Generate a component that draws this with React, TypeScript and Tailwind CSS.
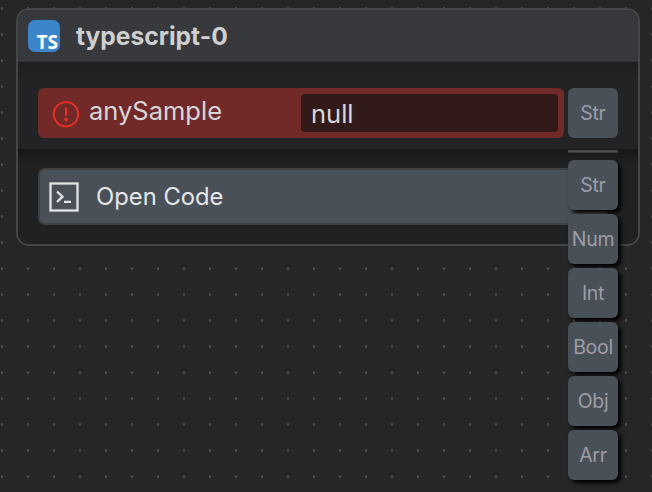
import React from 'react';

const outputTypes = ['Str', 'Num', 'Int', 'Bool', 'Obj', 'Arr'];

function TypeChip({ label, raised = false }: { label: string; raised?: boolean }) {
  return (
    <button
      className={
        'flex h-[50px] w-[50px] shrink-0 items-center justify-center rounded-[6px] bg-[#495058] text-[19.5px] leading-[22px] tracking-[-0.3px] text-[#9d9da6] ' +
        (raised ? 'shadow-[3px_3px_4px_#000000]' : '')
      }
    >
      {label}
    </button>
  );
}

function DotGrid() {
  return (
    <svg className="absolute inset-0 h-full w-full" aria-hidden="true">
      <defs>
        <pattern id="dots" width="26" height="26" patternUnits="userSpaceOnUse">
          <rect x="1" y="7" width="2" height="3" fill="#424242" />
          <rect x="1" y="8" width="2" height="1" fill="#505050" />
        </pattern>
      </defs>
      <rect width="100%" height="100%" fill="url(#dots)" />
    </svg>
  );
}

function AlertIcon() {
  return (
    <svg className="mt-[2px] h-[28px] w-[28px] shrink-0" viewBox="0 0 28 28" fill="none">
      <circle cx="14" cy="14.3" r="12.2" stroke="#ee3024" strokeWidth="1.8" />
      <path d="M14 7.8V15.8" stroke="#ee3024" strokeWidth="2" />
      <circle cx="14" cy="19.6" r="1.8" fill="#ee3024" />
    </svg>
  );
}

function TerminalIcon() {
  return (
    <svg className="h-[30px] w-[30px] shrink-0" viewBox="0 0 30 30" fill="none" stroke="#e2e4e6" strokeWidth="2.3">
      <rect x="1.5" y="1.5" width="27" height="27" />
      <path d="M8 9.5L13.5 14.7L8 20M15 19.8H22" />
    </svg>
  );
}

export default function App() {
  return (
    <div className="relative h-[492px] w-[652px] overflow-hidden bg-[#262626] pt-[8px] pl-[16px] font-['Inter',sans-serif]">
      <DotGrid />
      <section className="relative h-[238px] w-[624px] rounded-[13px] border-2 border-[#454648] bg-[#202123]">
        <header className="flex h-[52px] items-center rounded-t-[11px] border-b border-[#303134] bg-[#38393d] pl-[10px]">
          <div className="mt-px flex h-[32px] w-[32px] items-end justify-end rounded-[7px] bg-[#3b86cb] pr-[2px] pb-[3px] font-['Open_Sans',sans-serif] text-[19px] leading-[14px] font-bold text-white">
            TS
          </div>
          <h1 className="ml-[16px] text-[24.6px] leading-[30px] font-bold text-[#cfcfd0]">typescript-0</h1>
        </header>
        <div className="flex h-[87px] gap-[4px] bg-gradient-to-b from-[#1d1e20] to-[#222325] to-20% pt-[26px] pl-[20px]">
          <div className="flex h-[50px] w-[526px] items-center rounded-[6px] bg-[#722a28] pr-[6px] pl-[14px]">
            <AlertIcon />
            <span className="mt-[-4px] ml-[9px] w-[212px] text-[25.5px] leading-[32px] text-[#d6d7dc]">anySample</span>
            <div className="flex h-[38px] flex-1 items-center rounded-[4px] bg-[#321a19] pt-[2px] pl-[10px] text-[25.5px] leading-[32px] text-[#d6d7dc]">
              null
            </div>
          </div>
          <TypeChip label="Str" />
        </div>
        <div className="h-[95px] rounded-b-[11px] bg-gradient-to-b from-[#151618] to-[#202123] to-15% pt-[19px] pl-[20px]">
          <button className="flex h-[57px] w-[570px] items-center rounded-[7px] border-2 border-[#3e4042] bg-[#495058] pl-[9px] text-[23.8px] leading-[30px] text-[#e5e6e8]">
            <TerminalIcon />
            <span className="mt-px ml-[17px]">Open Code</span>
          </button>
        </div>
      </section>
      <aside className="absolute top-[150px] left-[568px] flex w-[50px] flex-col gap-[4px]">
        <div className="mb-[3px] h-[3px] border-b border-[#39393b] bg-[#4c4d4f]" />
        {outputTypes.map((type) => (
          <TypeChip key={type} label={type} raised />
        ))}
      </aside>
    </div>
  );
}
